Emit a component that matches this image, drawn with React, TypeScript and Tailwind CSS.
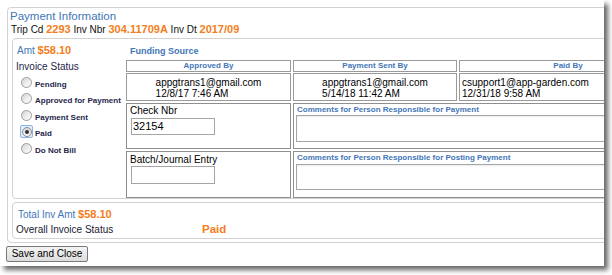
import React from "react"

const blue = "text-[#4376b8]"
const orange = "text-[#f47d20]"

function Radio({ label, checked = false }: { label: string; checked?: boolean }) {
  return (
    <div className="flex h-[16.5px] items-center">
      <div className="flex h-[13px] w-[13px] items-center justify-center ml-[7px]">
        {checked ? (
          <div className="flex h-[13px] w-[13px] items-center justify-center rounded-[2px] border border-[#8fb6ea] bg-[#e4eefb]">
            <div className="flex h-[10px] w-[10px] items-center justify-center rounded-full border border-[#8e8e8e] bg-gradient-to-b from-[#d8d8d8] to-[#f8f8f8]">
              <div className="h-[4px] w-[4px] rounded-full bg-[#333]" />
            </div>
          </div>
        ) : (
          <div className="h-[11px] w-[11px] rounded-full border border-[#9c9c9c] bg-gradient-to-br from-[#d2d2d2] via-[#ececec] to-[#fdfdfd]" />
        )}
      </div>
      <span className="ml-[2px] pt-[5px] text-[8px] font-bold leading-[10px] text-[#26264a]">{label}</span>
    </div>
  )
}

function HeaderCell({ children }: { children: React.ReactNode }) {
  return (
    <div className={`flex h-[12px] items-center justify-center border border-[#9a9a9a] text-[8px] font-bold leading-[10px] ${blue}`}>
      {children}
    </div>
  )
}

function SignCell({ email, date, center = true }: { email: string; date: string; center?: boolean }) {
  return (
    <div className={`flex h-[28px] border border-[#9a9a9a] pt-[3px] ${center ? "justify-center" : "pl-[2px]"}`}>
      <div className="text-left text-[10px] leading-[11px] text-black">
        <div>{email}</div>
        <div>{date}</div>
      </div>
    </div>
  )
}

export default function App() {
  return (
    <div className="relative h-[275px] w-[612px] overflow-hidden bg-white font-['Liberation_Sans',Arial,sans-serif]">
      <div className="h-[266px] w-[604px] overflow-hidden bg-white shadow-[4px_4px_5px_rgba(0,0,0,0.6)]">
        {/* outer fieldset */}
        <div className="ml-[7px] mt-[7px] h-[236px] w-[720px] rounded-[4px] border border-[#d2d2d2]">
          <div className={`mt-[1px] pl-[2px] text-[11.5px] leading-[14px] ${blue}`}>Payment Information</div>
          <div className="pl-[3px] text-[10px] leading-[13px] text-[#111]">
            Trip Cd <span className={`text-[11px] font-bold ${orange}`}>2293</span> Inv Nbr{" "}
            <span className={`text-[11px] font-bold ${orange}`}>304.11709A</span> Inv Dt{" "}
            <span className={`text-[11px] font-bold ${orange}`}>2017/09</span>
          </div>

          {/* details fieldset */}
          <div className="ml-[4px] mt-[2px] flex h-[161px] rounded-[4px] border border-[#d2d2d2]">
            <div className="w-[113px] shrink-0">
              <div className="mt-[5px] pl-[4px] text-[10px] leading-[13px]">
                <span className={blue}>Amt</span> <span className={`text-[11px] font-bold ${orange}`}>$58.10</span>
              </div>
              <div className="mt-[4px] pl-[3px] text-[10px] leading-[12px] text-[#26264a]">Invoice Status</div>
              <div className="mt-[1px]">
                <Radio label="Pending" />
                <Radio label="Approved for Payment" />
                <Radio label="Payment Sent" />
                <Radio label="Paid" checked />
                <Radio label="Do Not Bill" />
              </div>
            </div>

            <div className="flex-1">
              <div className={`pl-[4px] pt-[6px] text-[9px] font-bold leading-[12px] ${blue}`}>Funding Source</div>
              <div className="mt-[3px] flex flex-col">
                <div className="grid grid-cols-[165px_164px_218px] gap-x-[2px]">
                  <HeaderCell>Approved By</HeaderCell>
                  <HeaderCell>Payment Sent By</HeaderCell>
                  <HeaderCell>Paid By</HeaderCell>
                </div>
                <div className="mt-[1px] grid grid-cols-[165px_164px_218px] gap-x-[2px]">
                  <SignCell email="appgtrans1@gmail.com" date="12/8/17 7:46 AM" />
                  <SignCell email="appgtrans1@gmail.com" date="5/14/18 11:42 AM" />
                  <SignCell email="csupport1@app-garden.com" date="12/31/18 9:58 AM" center={false} />
                </div>
                <div className="mt-[2px] grid grid-cols-[165px_384px] gap-x-[2px]">
                  <div className="h-[46px] border border-[#8f8f8f] pl-[3px] pt-[1px]">
                    <div className="text-[10px] leading-[12px] text-black">Check Nbr</div>
                    <div className="ml-[1px] mt-[1px] flex h-[17px] w-[84px] items-center border border-[#a5a5a5] pl-[1px] text-[11px] text-black">
                      32154
                    </div>
                  </div>
                  <div className="h-[46px] border border-[#8f8f8f]">
                    <div className={`pl-[3px] text-[8px] font-bold leading-[11px] ${blue}`}>
                      Comments for Person Responsible for Payment
                    </div>
                    <div className="ml-[2px] h-[27px] border border-[#a5a5a5] bg-white shadow-[inset_0_1px_2px_rgba(0,0,0,0.08)]" />
                  </div>
                </div>
                <div className="mt-[2px] grid grid-cols-[165px_384px] gap-x-[2px]">
                  <div className="h-[47px] border border-[#8f8f8f] pl-[3px] pt-[2px]">
                    <div className="text-[10px] leading-[12px] text-black">Batch/Journal Entry</div>
                    <div className="ml-[1px] h-[18px] w-[84px] border border-[#a5a5a5]" />
                  </div>
                  <div className="h-[47px] border border-[#8f8f8f]">
                    <div className={`pl-[3px] text-[8px] font-bold leading-[11px] ${blue}`}>
                      Comments for Person Responsible for Posting Payment
                    </div>
                    <div className="ml-[2px] mt-[1px] h-[26px] border border-[#a5a5a5] bg-white shadow-[inset_0_1px_2px_rgba(0,0,0,0.08)]" />
                  </div>
                </div>
              </div>
            </div>
          </div>

          {/* totals fieldset */}
          <div className="ml-[4px] mt-[3px] h-[37px] rounded-[4px] border border-[#d2d2d2]">
            <div className="pl-[5px] pt-[5px] text-[10px] leading-[13px]">
              <span className={blue}>Total Inv Amt</span>{" "}
              <span className={`text-[11px] font-bold ${orange}`}>$58.10</span>
            </div>
            <div className="mt-[2px] flex pl-[3px] text-[10px] leading-[13px]">
              <span className="w-[186px] text-[#1b1b33]">Overall Invoice Status</span>
              <span className={`text-[11.5px] font-bold ${orange}`}>Paid</span>
            </div>
          </div>
        </div>

        <button className="ml-[6px] mt-[3px] flex h-[16px] w-[82px] items-center justify-center rounded-[2px] border border-[#7a7a7a] bg-gradient-to-b from-[#f4f4f4] to-[#dcdcdc] text-[10px] leading-[12px] text-black">
          Save and Close
        </button>
      </div>
    </div>
  )
}
